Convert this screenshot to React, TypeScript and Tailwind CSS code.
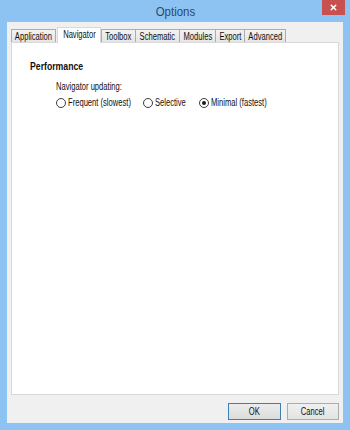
import type { ReactNode } from "react";
import { X } from "lucide-react";

const tabs = [
  { name: "Application", w: "w-[45px]" },
  { name: "Navigator", w: "w-[44px]", active: true },
  { name: "Toolbox", w: "w-[35px]" },
  { name: "Schematic", w: "w-[45px]" },
  { name: "Modules", w: "w-[37px]" },
  { name: "Export", w: "w-[30px]" },
  { name: "Advanced", w: "w-[42px]" },
];

// the dialog font is narrow, squeeze Liberation Sans to match
const T = ({ children, left }: { children: ReactNode; left?: boolean }) => (
  <span
    className={`inline-block whitespace-nowrap scale-x-[0.76] ${left ? "origin-left" : "origin-center"}`}
  >
    {children}
  </span>
);

const Radio = ({ label, checked, w }: { label: string; checked?: boolean; w: string }) => (
  <label className={`flex items-center gap-[2px] ${w}`}>
    <span className="shrink-0 w-[10px] h-[10px] rounded-full border border-[#3c3c3c] bg-white flex items-center justify-center">
      {checked && <span className="w-[4px] h-[4px] rounded-full bg-[#1a1a1a]" />}
    </span>
    <T left>{label}</T>
  </label>
);

export default function App() {
  return (
    <div
      className="w-[350px] h-[430px] bg-[#8cc3f2] flex flex-col text-[10px] text-[#111] overflow-hidden"
      style={{ fontFamily: "'Liberation Sans', sans-serif" }}
    >
      {/* title bar */}
      <div className="h-[22px] relative flex items-center justify-center">
        <span className="text-[13px] text-[#2d4a68] leading-none pt-[1px] inline-block scale-x-[0.88]">
          Options
        </span>
        <div className="absolute top-0 right-[5px] w-[23px] h-[15px] bg-[#c75050] flex items-center justify-center">
          <X className="size-[9px] text-white" strokeWidth={4} />
        </div>
      </div>

      {/* client */}
      <div className="flex-1 mx-[7px] mb-[7px] bg-[#f0f0f0] flex flex-col pt-[5px] px-[4px]">
        <div className="flex items-end h-[15px]">
          {tabs.map((t) =>
            t.active ? (
              <div
                key={t.name}
                className={`${t.w} h-[16px] -mb-px mx-[1px] bg-white border border-b-0 border-[#d9d9d9] relative z-10 flex items-center justify-center pb-[2px]`}
              >
                <T>{t.name}</T>
              </div>
            ) : (
              <div
                key={t.name}
                className={`${t.w} h-[13px] bg-gradient-to-b from-[#f2f2f2] to-[#e5e5e5] border border-b-0 border-[#acacac] -ml-px first:ml-0 flex items-center justify-center`}
              >
                <T>{t.name}</T>
              </div>
            )
          )}
        </div>

        <div className="w-[328px] h-[353px] bg-white border border-[#d9d9d9] pt-[18px] pl-[18px]">
          <div className="font-bold leading-[12px]">
            <span className="inline-block whitespace-nowrap origin-left scale-x-[0.87]">Performance</span>
          </div>
          <div className="pl-[26px] pt-[8px]">
            <div className="leading-[12px]">
              <T left>Navigator updating:</T>
            </div>
            <div className="flex items-center mt-[4px] leading-[12px]">
              <Radio label="Frequent (slowest)" w="w-[87px]" />
              <Radio label="Selective" w="w-[56px]" />
              <Radio label="Minimal (fastest)" checked w="w-[80px]" />
            </div>
          </div>
        </div>

        <div className="flex justify-end gap-[6px] mt-[8px] w-[328px]">
          <button className="w-[53px] h-[17px] border border-[#3c7fb1] bg-gradient-to-b from-[#ececec] to-[#dcdcdc] flex items-center justify-center">
            <T>OK</T>
          </button>
          <button className="w-[52px] h-[17px] border border-[#acacac] bg-gradient-to-b from-[#f0f0f0] to-[#e3e3e3] flex items-center justify-center">
            <T>Cancel</T>
          </button>
        </div>
      </div>
    </div>
  );
}
